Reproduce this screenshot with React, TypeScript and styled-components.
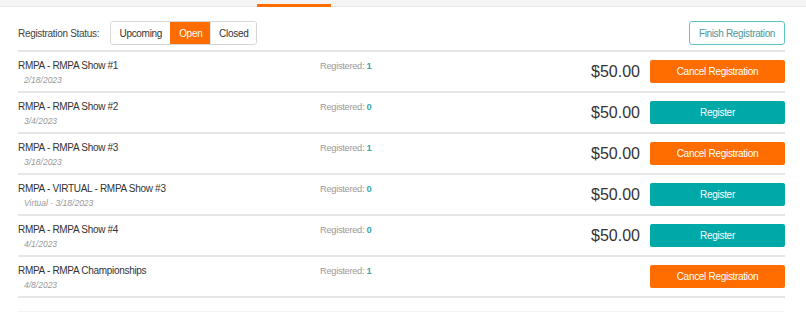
import styled, { createGlobalStyle } from "styled-components";

const Global = createGlobalStyle`
    body {
        margin: 0;
        background: #ffffff;
        font-family: "Liberation Sans", Arial, sans-serif;
        color: #333333;
    }
`;

const TopBar = styled.div`
    height: 6px;
    background: #f4f4f4;
    border-bottom: 1px solid #e6e6e6;
    position: relative;
`;

const ActiveTab = styled.div`
    position: absolute;
    left: 257px;
    width: 74px;
    bottom: -1px;
    height: 3px;
    background: #ff6d00;
`;

const Page = styled.div`
    padding: 14px 21px 0 18px;
`;

const Toolbar = styled.div`
    display: flex;
    align-items: center;
    justify-content: space-between;
    padding-bottom: 5px;
    border-bottom: 2px solid #e6e6e6;
`;

const StatusGroup = styled.div`
    display: flex;
    align-items: center;
    gap: 11px;
`;

const Label = styled.span`
    font-size: 10px;
    letter-spacing: -0.3px;
    color: #444;
`;

const Segments = styled.div`
    display: flex;
    border: 1px solid #d6d6d6;
    border-radius: 3px;
    overflow: hidden;
    height: 22px;
`;

const Segment = styled.button<{ $active?: boolean; $w: number }>`
    width: ${(p) => p.$w}px;
    border: none;
    border-left: 1px solid ${(p) => (p.$active ? "#ff6d00" : "#e2e2e2")};
    &:first-child { border-left: none; }
    background: ${(p) => (p.$active ? "#ff6d00" : "#fff")};
    color: ${(p) => (p.$active ? "#fff" : "#333")};
    font-family: inherit;
    font-size: 10px;
    letter-spacing: -0.3px;
    padding: 0;
`;

const FinishButton = styled.button`
    width: 96px;
    height: 24px;
    border: 1px solid #5cc6c6;
    border-radius: 3px;
    background: #fff;
    color: #4b9a9a;
    font-family: inherit;
    font-size: 10px;
    letter-spacing: -0.35px;
    padding: 0;
`;

const Row = styled.div`
    display: grid;
    grid-template-columns: 302px 1fr auto 135px;
    grid-template-rows: 23px;
    align-items: start;
    padding: 8px 0;
    border-bottom: 2px solid #e6e6e6;
`;

const Info = styled.div`
    display: flex;
    flex-direction: column;
`;

const Title = styled.div`
    font-size: 10px;
    letter-spacing: -0.3px;
    line-height: 12px;
    color: #333;
`;

const DateText = styled.div`
    font-size: 8.5px;
    line-height: 12px;
    margin-top: 2px;
    font-style: italic;
    color: #999;
    padding-left: 6px;
`;

const Registered = styled.div`
    font-size: 9.3px;
    letter-spacing: -0.3px;
    line-height: 12px;
    color: #9a9a9a;
`;

const Count = styled.span`
    color: #3aa8a8;
    font-weight: bold;
`;

const Price = styled.div`
    font-size: 16px;
    line-height: 23px;
    color: #333;
    padding-right: 10px;
`;

const ActionButton = styled.button<{ $kind: "cancel" | "register" }>`
    height: 23px;
    width: 135px;
    border: none;
    border-radius: 2px;
    background: ${(p) => (p.$kind === "cancel" ? "#ff6d00" : "#00a8a8")};
    color: #fff;
    font-family: inherit;
    font-size: 10px;
    letter-spacing: -0.3px;
    padding: 0;
`;

const Footer = styled.div`
    height: 13px;
    border-bottom: 1px solid #f4f4f4;
`;

type Show = {
    title: string;
    date: string;
    count: number;
    price?: string;
    registered: boolean;
};

const shows: Show[] = [
    { title: "RMPA - RMPA Show #1", date: "2/18/2023", count: 1, price: "$50.00", registered: true },
    { title: "RMPA - RMPA Show #2", date: "3/4/2023", count: 0, price: "$50.00", registered: false },
    { title: "RMPA - RMPA Show #3", date: "3/18/2023", count: 1, price: "$50.00", registered: true },
    { title: "RMPA - VIRTUAL - RMPA Show #3", date: "Virtual - 3/18/2023", count: 0, price: "$50.00", registered: false },
    { title: "RMPA - RMPA Show #4", date: "4/1/2023", count: 0, price: "$50.00", registered: false },
    { title: "RMPA - RMPA Championships", date: "4/8/2023", count: 1, registered: true },
];

function App() {
    return <>
        <Global />
        <TopBar>
            <ActiveTab />
        </TopBar>
        <Page>
            <Toolbar>
                <StatusGroup>
                    <Label>Registration Status:</Label>
                    <Segments>
                        <Segment $w={59}>Upcoming</Segment>
                        <Segment $w={40} $active>Open</Segment>
                        <Segment $w={46}>Closed</Segment>
                    </Segments>
                </StatusGroup>
                <FinishButton>Finish Registration</FinishButton>
            </Toolbar>
            {shows.map((s) => (
                <Row key={s.title}>
                    <Info>
                        <Title>{s.title}</Title>
                        <DateText>{s.date}</DateText>
                    </Info>
                    <Registered>Registered: <Count>{s.count}</Count></Registered>
                    <Price>{s.price}</Price>
                    <ActionButton $kind={s.registered ? "cancel" : "register"}>
                        {s.registered ? "Cancel Registration" : "Register"}
                    </ActionButton>
                </Row>
            ))}
            <Footer />
        </Page>
    </>
}

export default App;
